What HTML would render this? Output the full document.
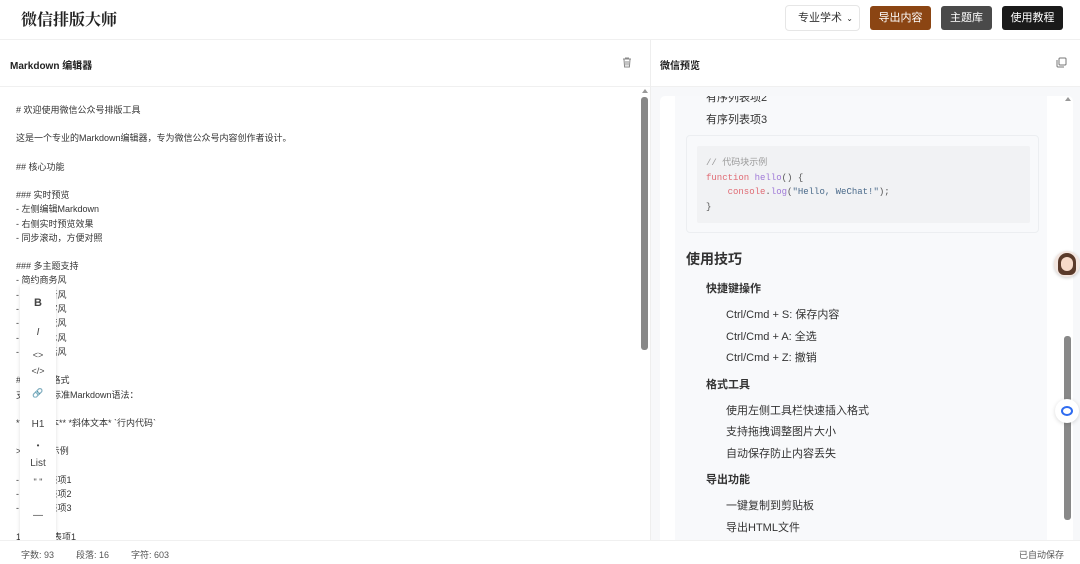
<!DOCTYPE html>
<html><head><meta charset="utf-8"><style>
*{margin:0;padding:0;box-sizing:border-box}
body{width:1080px;height:564px;overflow:hidden;background:#fff;font-family:"Liberation Sans","Noto Sans CJK SC",sans-serif;color:#333;position:relative}
.a{position:absolute;white-space:nowrap}
.btn{position:absolute;top:6px;height:24px;border-radius:3px;color:#fff;font-size:11px;line-height:24px;text-align:center}
.ed{font-size:9px;color:#333;left:16px}
.tb{position:absolute;left:20px;width:36px;text-align:center;font-size:10px;color:#444}
.pv{font-size:11px;color:#333}
</style></head><body>
<div class="a" style="left:21px;top:7px;font-family:'Noto Serif CJK SC',serif;font-weight:700;font-size:16px;color:#222">微信排版大师</div>
<div class="a" style="left:785px;top:5px;width:75px;height:26px;border:1px solid #e6e6e6;border-radius:4px;font-size:11px;color:#333;padding-left:12px;padding-top:6px;line-height:13px">专业学术<span style="position:absolute;right:6px;top:6px;font-size:8px">⌄</span></div>
<div class="btn" style="left:870px;width:61px;background:#8b4513">导出内容</div>
<div class="btn" style="left:941px;width:51px;background:#4a4a4a">主题库</div>
<div class="btn" style="left:1002px;width:61px;background:#1a1a1a">使用教程</div>
<div class="a" style="left:0;top:39px;width:1080px;height:1px;background:#f0f0f0"></div>
<div class="a" style="left:650px;top:40px;width:1px;height:500px;background:#eee"></div>
<div class="a" style="left:0;top:86px;width:650px;height:1px;background:#f0f0f0"></div>
<div class="a" style="left:651px;top:86px;width:429px;height:1px;background:#f0f0f0"></div>
<div class="a" style="left:10px;top:57px;font-size:10px;font-weight:700;color:#222">Markdown 编辑器</div>
<svg class="a" style="left:622px;top:57px" width="10" height="11" viewBox="0 0 10 11"><path d="M1 2h8M3.5 2V1h3v1M2 2.5l.6 7.5h4.8l.6-7.5M4 4v4.5M6 4v4.5" stroke="#888" fill="none" stroke-width="1"/></svg>
<div class="a" style="left:660px;top:57px;font-size:10px;font-weight:700;color:#222">微信预览</div>
<svg class="a" style="left:1056px;top:57px" width="11" height="11" viewBox="0 0 11 11"><rect x="3" y="1" width="7" height="7" rx="1" stroke="#777" fill="none"/><path d="M1 3v6a1 1 0 0 0 1 1h6" stroke="#777" fill="none"/></svg>
<div class="a ed" style="top:103px">#&nbsp;欢迎使用微信公众号排版工具</div>
<div class="a ed" style="top:131px">这是一个专业的Markdown编辑器，专为微信公众号内容创作者设计。</div>
<div class="a ed" style="top:160px">##&nbsp;核心功能</div>
<div class="a ed" style="top:188px">###&nbsp;实时预览</div>
<div class="a ed" style="top:202px">-&nbsp;左侧编辑Markdown</div>
<div class="a ed" style="top:217px">-&nbsp;右侧实时预览效果</div>
<div class="a ed" style="top:231px">-&nbsp;同步滚动，方便对照</div>
<div class="a ed" style="top:259px">###&nbsp;多主题支持</div>
<div class="a ed" style="top:273px">-&nbsp;简约商务风</div>
<div class="a ed" style="top:288px">-&nbsp;文艺清新风</div>
<div class="a ed" style="top:302px">-&nbsp;科技极客风</div>
<div class="a ed" style="top:316px">-&nbsp;时尚潮流风</div>
<div class="a ed" style="top:331px">-&nbsp;专业学术风</div>
<div class="a ed" style="top:345px">-&nbsp;温馨生活风</div>
<div class="a ed" style="top:373px">###&nbsp;丰富格式</div>
<div class="a ed" style="top:388px">支持所有标准Markdown语法：</div>
<div class="a ed" style="top:416px">**粗体文本**&nbsp;*斜体文本*&nbsp;`行内代码`</div>
<div class="a ed" style="top:444px">&gt;&nbsp;引用块示例</div>
<div class="a ed" style="top:473px">-&nbsp;无序列表项1</div>
<div class="a ed" style="top:487px">-&nbsp;无序列表项2</div>
<div class="a ed" style="top:501px">-&nbsp;无序列表项3</div>
<div class="a ed" style="top:530px">1.&nbsp;有序列表项1</div>
<div class="a" style="left:20px;top:285px;width:36px;height:255px;background:#fff;box-shadow:0 1px 4px rgba(0,0,0,.12)"></div>
<div class="tb" style="top:297px;font-weight:700;font-size:11px">B</div>
<div class="tb" style="top:327px;font-style:italic">I</div>
<div class="tb" style="top:350px;font-size:9px">&lt;&gt;</div>
<div class="tb" style="top:366px;font-size:9px">&lt;/&gt;</div>
<div class="tb" style="top:388px;font-size:9px;color:#a89ab8">🔗</div>
<div class="tb" style="top:419px">H1</div>
<div class="tb" style="top:441px;font-size:8px">•</div>
<div class="tb" style="top:458px">List</div>
<div class="tb" style="top:477px;font-size:9px">" "</div>
<div class="tb" style="top:510px">—</div>
<div class="a" style="left:642px;top:89px;width:0;height:0;border:3px solid transparent;border-bottom:4px solid #999;border-top:0"></div>
<div class="a" style="left:641px;top:97px;width:7px;height:253px;background:#888;border-radius:3px"></div>
<div class="a" style="left:651px;top:87px;width:429px;height:453px;background:#f7f8fa"></div>
<div class="a" style="left:660px;top:96px;width:413px;height:444px;background:#fff;border-radius:5px 5px 0 0"></div>
<div class="a" style="left:675px;top:96px;width:372px;height:444px;background:#f8f9fb"></div>
<div class="a" style="left:1064px;top:336px;width:7px;height:184px;background:#888;border-radius:3px"></div>
<div class="a" style="left:1065px;top:97px;width:0;height:0;border:3px solid transparent;border-bottom:4px solid #999;border-top:0"></div>
<div class="a pv" style="left:706px;top:89px;clip-path:inset(7px 0 0 0)">有序列表项2</div>
<div class="a pv" style="left:706px;top:111px">有序列表项3</div>
<div class="a" style="left:686px;top:135px;width:353px;height:98px;border:1px solid #eceef1;border-radius:4px"></div>
<div class="a" style="left:697px;top:146px;width:333px;height:77px;background:#f1f2f4;border-radius:2px"></div>
<div class="a" style="left:706px;top:156px;font-family:'Liberation Mono','Noto Sans CJK SC',monospace;font-size:9px;line-height:14.7px;color:#555">
<div style="color:#999">// 代码块示例</div>
<div><span style="color:#e06c75">function</span> <span style="color:#a07ad8">hello</span>() {</div>
<div>&nbsp;&nbsp;&nbsp;&nbsp;<span style="color:#e06c75">console</span>.<span style="color:#a07ad8">log</span>(<span style="color:#4a6a8a">"Hello, WeChat!"</span>);</div>
<div>}</div></div>
<div class="a" style="left:686px;top:249px;font-size:14px;font-weight:700;color:#333">使用技巧</div>
<div class="a pv" style="left:706px;top:280px;font-weight:700">快捷键操作</div>
<div class="a pv" style="left:726px;top:306px">Ctrl/Cmd + S: 保存内容</div>
<div class="a pv" style="left:726px;top:328px">Ctrl/Cmd + A: 全选</div>
<div class="a pv" style="left:726px;top:349px">Ctrl/Cmd + Z: 撤销</div>
<div class="a pv" style="left:706px;top:376px;font-weight:700">格式工具</div>
<div class="a pv" style="left:726px;top:402px">使用左侧工具栏快速插入格式</div>
<div class="a pv" style="left:726px;top:423px">支持拖拽调整图片大小</div>
<div class="a pv" style="left:726px;top:445px">自动保存防止内容丢失</div>
<div class="a pv" style="left:706px;top:471px;font-weight:700">导出功能</div>
<div class="a pv" style="left:726px;top:497px">一键复制到剪贴板</div>
<div class="a pv" style="left:726px;top:519px">导出HTML文件</div>
<div class="a" style="left:1054px;top:251px;width:26px;height:26px;border-radius:50%;background:#f3e6e0;box-shadow:0 1px 3px rgba(0,0,0,.2);overflow:hidden">
<div class="a" style="left:4px;top:2px;width:18px;height:22px;border-radius:9px 9px 6px 6px;background:#5a3a2a"></div>
<div class="a" style="left:7px;top:6px;width:12px;height:14px;border-radius:6px;background:#f6d9c8"></div></div>
<div class="a" style="left:1055px;top:399px;width:24px;height:24px;border-radius:50%;background:#fff;box-shadow:0 1px 4px rgba(0,0,0,.15)">
<div class="a" style="left:6px;top:7px;width:12px;height:10px;border:2.5px solid #2f6cf0;border-radius:50%"></div></div>
<div class="a" style="left:0;top:540px;width:1080px;height:24px;background:#fff;border-top:1px solid #f0f0f0"></div>
<div class="a" style="left:21px;top:548px;font-size:9px;color:#555">字数:&nbsp;93</div>
<div class="a" style="left:76px;top:548px;font-size:9px;color:#555">段落:&nbsp;16</div>
<div class="a" style="left:131px;top:548px;font-size:9px;color:#555">字符:&nbsp;603</div>
<div class="a" style="left:1019px;top:548px;font-size:9px;color:#555">已自动保存</div>
</body></html>
